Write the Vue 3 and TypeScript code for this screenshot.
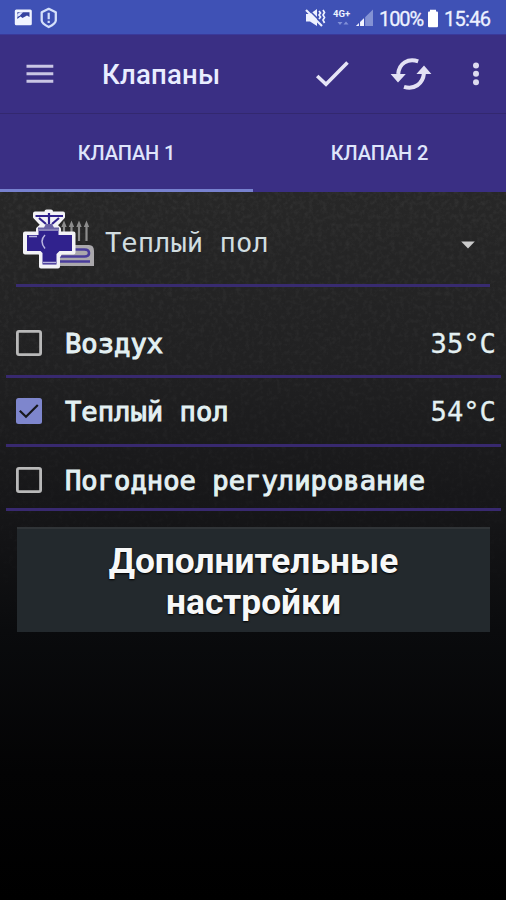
<script setup lang="ts">
import { ref } from 'vue'

interface Mode {
  name: string
  value: string
  checked: boolean
}

const tabs = ['КЛАПАН 1', 'КЛАПАН 2']
const activeTab = ref(0)
const modes = ref<Mode[]>([
  { name: 'Воздух', value: '35°C', checked: false },
  { name: 'Теплый пол', value: '54°C', checked: true },
  { name: 'Погодное регулирование', value: '', checked: false },
])
</script>

<template>
  <div class="screen">
    <div class="status">
      <svg class="st-left" width="60" height="34" viewBox="0 0 60 34">
        <rect x="14.8" y="9.6" width="17" height="15.6" rx="1.5" fill="#f0f4ff" />
        <path d="M17.3 12.3H29.5V17L27 15.5L22.5 18L20.5 16.5L17.3 19Z" fill="#3442a0" />
        <path d="M17.3 14L20 12.3H23L20 15.5L17.3 17Z" fill="#dfe5ff" />
        <path d="M48.7 8.8L55.8 12.3V20.5Q55.8 23.5 48.7 27Q41.7 23.5 41.7 20.5V12.3Z" fill="none" stroke="#d5e0fa" stroke-width="2.3" stroke-linejoin="round" />
        <path d="M48.7 12.8V19.2M48.7 20.8V23" stroke="#d5e0fa" stroke-width="2.2" />
      </svg>
      <svg class="st-right" width="74" height="34" viewBox="0 0 74 34">
        <path d="M3 14H7L14 9V26L7 21.5H3Z" fill="#edf1ff" />
        <path d="M5 9L21 25" stroke="#3f51b5" stroke-width="1.6" />
        <path d="M3 10L19 26" stroke="#edf1ff" stroke-width="2.2" />
        <path d="M16 11L17.5 13L16 15L17.5 17L16 19M20 10L21.5 12.5L20 15L21.5 17.5L20 20L21.5 23" fill="none" stroke="#edf1ff" stroke-width="1.7" />
        <text class="net" x="30" y="17.4">4G+</text>
        <path d="M34.5 22H39.5L37 25ZM40.5 24.5H45.5L43 21.5Z" fill="#8190d8" />
        <path d="M53 26L70 9.5V26Z" fill="#8492d4" />
        <path d="M53 26L61 18.2V26Z" fill="#f3f5ff" />
        <path d="M56.5 19V26M61.6 15V26" stroke="#3f51b5" stroke-width="1.1" />
      </svg>
      <span class="percent">100%</span>
      <svg class="battery" width="12" height="19" viewBox="0 0 12 19">
        <path d="M3 .8H9V2.5H10Q11 2.5 11 3.8V17Q11 18.2 10 18.2H2Q1 18.2 1 17V3.8Q1 2.5 2 2.5H3Z" fill="#fff" />
      </svg>
      <span class="clock">15:46</span>
    </div>

    <header class="toolbar">
      <svg class="menu" width="28" height="20" viewBox="0 0 28 20">
        <path d="M.5 2.3H27.3M.5 9.8H27.3M.5 17.3H27.3" stroke="#c9c6e4" stroke-width="3" />
      </svg>
      <h1>Клапаны</h1>
      <svg class="check" width="36" height="28" viewBox="0 0 36 28">
        <path d="M2.2 16L11 24.2L32.5 2.6" fill="none" stroke="#e6e5f6" stroke-width="3.6" />
      </svg>
      <svg class="sync" width="42" height="34" viewBox="0 0 42 34">
        <path d="M28.2 4.4C18 .8 9 6.5 8.2 17M14 29.8C24 33 33 27 34 16" fill="none" stroke="#e3e1f4" stroke-width="4" />
        <path d="M.6 17H15.8L8 25.6ZM26.4 17H41.4L34 8.4Z" fill="#e3e1f4" />
      </svg>
      <svg class="dots" width="8" height="26" viewBox="0 0 8 26">
        <circle cx="4" cy="4.4" r="3" /><circle cx="4" cy="12.7" r="3" /><circle cx="4" cy="21.2" r="3" />
      </svg>
    </header>

    <nav class="tabs">
      <div v-for="(tab, i) in tabs" :key="tab" class="tab" :class="{ active: i === activeTab }" @click="activeTab = i">{{ tab }}</div>
    </nav>

    <main class="content">
      <svg class="grain" width="506" height="708" aria-hidden="true">
        <filter id="grain" x="0" y="0" width="100%" height="100%">
          <feTurbulence type="fractalNoise" baseFrequency=".22" numOctaves="3" seed="4" />
          <feColorMatrix values="0 0 0 0 1  0 0 0 0 1  0 0 0 0 1  .11 0 0 0 -.045" />
        </filter>
        <linearGradient id="fade" x1="0" y1="0" x2="0" y2="1">
          <stop offset="0" stop-color="#fff" /><stop offset=".7" stop-color="#000" />
        </linearGradient>
        <mask id="top"><rect width="506" height="708" fill="url(#fade)" /></mask>
        <g mask="url(#top)"><rect width="506" height="708" filter="url(#grain)" /></g>
      </svg>

      <div class="spinner">
        <svg class="valve" width="74" height="62" viewBox="0 0 74 62">
          <path d="M43 32V15M50.5 32V15M58 32V15M65.5 32V15" stroke="#8c8c8c" stroke-width="2.2" />
          <path d="M40.3 18L43 11.5L45.7 18ZM47.8 18L50.5 11.5L53.2 18ZM55.3 18L58 11.5L60.7 18ZM62.8 18L65.5 11.5L68.2 18Z" fill="#8c8c8c" />
          <path d="M40 36H68Q73 36 73 42V57H36V44Z" fill="#aaa8ac" />
          <path d="M50 40.5H63.5Q68 40.5 68 44T63.5 47.5H38M38 52.5H69" fill="none" stroke="#493c9b" stroke-width="2.6" />
          <path class="halo" d="M14 4.5H25.5V2.5H30V4.5H42V8L37 13.5L34 16L38 20V24.5H52.5V43.5H39.5L37 48V57.5H20V45L18 43.5H4V24.5H17V20L21.5 16L14 8Z" />
          <path class="body" d="M6 26H17.5V22H37.5V26H51V42H38.5L35.5 45V55.5H21.5V44L19.5 42H6Z" />
          <path d="M14.5 7H42M28 4V18M18 9L25 15M38 9L31 15" stroke="#30228d" stroke-width="2.2" />
          <path d="M25 15H31L33 18.5H38V22H17V18.5H23Z" fill="#6962a5" />
          <path d="M17 21H38" stroke="#a6a1cc" stroke-width="1" />
          <path d="M24 26Q18 32 24 39.5M8 27.5H16M22 53.5H35" fill="none" stroke="#b9b5df" stroke-width="1.5" />
        </svg>
        <span class="mono choice">Теплый пол</span>
        <svg class="arrow" width="14" height="8" viewBox="0 0 14 8"><path d="M.2.5H13.8L7 7.6Z" fill="#cbcbcb" /></svg>
      </div>

      <div class="list">
        <div v-for="mode in modes" :key="mode.name" class="row" @click="mode.checked = !mode.checked">
          <svg class="box" width="28" height="28" viewBox="0 0 28 28">
            <template v-if="mode.checked">
              <rect x="1" y="1" width="26" height="26" rx="2.5" fill="#7e86cd" />
              <path d="M4.8 13.8L11 19.8L22.8 8" fill="none" stroke="#17181d" stroke-width="2.2" />
            </template>
            <rect v-else x="2.4" y="2.4" width="23.2" height="23.2" rx="1.6" fill="none" stroke="#b9b9b9" stroke-width="2.8" />
          </svg>
          <span class="mono name">{{ mode.name }}</span>
          <span class="mono value">{{ mode.value }}</span>
        </div>
      </div>

      <button class="more">Дополнительные<br />настройки</button>
    </main>
  </div>
</template>

<style>
body { background: #000; }
</style>

<style scoped>
.screen { width: 506px; height: 900px; overflow: hidden; display: flex; flex-direction: column; font-family: Roboto, sans-serif; }
.status { height: 34px; background: #3f51b5; display: flex; align-items: center; color: #edf1ff; line-height: 34px; }
.st-right { margin-left: 243px; }
.net { font: bold 9.5px Roboto, sans-serif; fill: #edf1ff; }
.percent { width: 44px; margin-left: 2px; padding-top: 3px; font-size: 20px; letter-spacing: -1.1px; white-space: nowrap; -webkit-text-stroke: 0.3px #edf1ff; }
.battery { margin: 2px 0 0 4px; }
.clock { margin-left: 5px; padding-top: 3px; font-size: 20px; letter-spacing: -0.7px; -webkit-text-stroke: 0.3px #edf1ff; }
.toolbar { height: 80px; background: #3a2f84; display: flex; align-items: center; border-bottom: 1px solid #33286f; box-sizing: border-box; box-shadow: inset 0 1px #3a399a; }
.menu { margin-left: 26px; }
h1 { width: 212px; margin: 3px 0 0 48px; font-size: 27.5px; line-height: 32px; font-weight: 500; color: #e9edff; letter-spacing: 0.25px; }
.check { margin-left: 1px; }
.sync { margin-left: 39px; margin-top: 1px; }
.dots { margin-left: 40px; fill: #dddbef; }
.tabs { height: 78px; background: #3a2f84; display: grid; grid-template-columns: 1fr 1fr; }
.tab { display: flex; align-items: center; justify-content: center; box-sizing: border-box; padding-top: 3px; border-bottom: 3px solid transparent; font-size: 20px; font-weight: 500; color: #dfe5fb; letter-spacing: -0.1px; }
.active { border-bottom-color: #7781cf; }
.content { position: relative; flex: 1; display: flex; flex-direction: column; background: linear-gradient(#272727 0, #212122 24%, #161618 45%, #0a0b0d 62%, #030304 82%, #000 100%); }
.grain { position: absolute; left: 0; top: 0; }
.spinner, .list, .more { position: relative; }
.mono { font-family: "DejaVu Sans Mono", monospace; font-size: 27.2px; line-height: 34px; color: #e3f0f2; white-space: nowrap; }
.spinner { height: 95px; margin: 0 16px; box-sizing: border-box; border-bottom: 3px solid #382b70; display: flex; align-items: flex-start; }
.valve { margin: 17px 0 0 5px; }
.halo { fill: #f2f2f6; stroke: #f2f2f6; stroke-width: 4; stroke-linejoin: round; }
.body { fill: #30228d; }
.choice { margin: 34px 0 0 10px; color: #d1dde0; }
.arrow { margin: 49px 15px 0 auto; }
.list { margin: 24px 5px 0 6px; }
.row { height: 69px; box-sizing: border-box; border-bottom: 3px solid #38296f; display: flex; align-items: center; }
.row:first-child { height: 67px; }
.row:last-child { height: 64px; padding-top: 4px; }
.box { margin-left: 9px; }
.name { margin: 2px 0 0 22px; -webkit-text-stroke: 1px #e3f0f2; }
.value { margin: 2px 5px 0 auto; -webkit-text-stroke: 0.3px #e3f0f2; }
.more { width: 473px; height: 105px; margin: 16px 0 0 17px; padding: 3px 0 0; border: 0; border-top: 2px solid #303437; background: #23292d; color: #f7f8f8; font: bold 35.3px/41px Roboto, sans-serif; text-shadow: 0 1px 2px #000; }
</style>
